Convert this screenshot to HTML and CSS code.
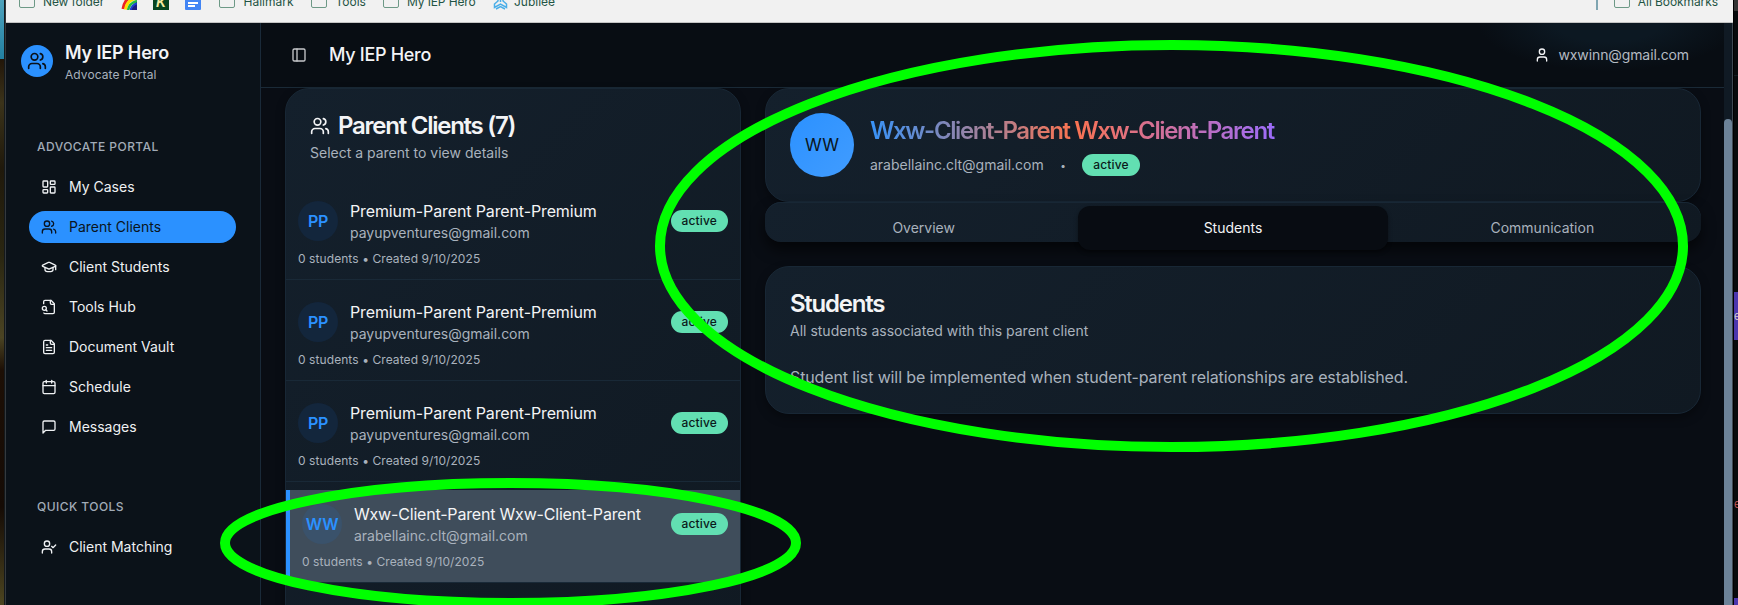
FILE: index.html
```html
<!DOCTYPE html>
<html lang="en">
<head>
<meta charset="utf-8">
<title>My IEP Hero</title>
<link rel="stylesheet" href="styles.css">
</head>
<body>
<svg class="defs" aria-hidden="true">
  <symbol id="users" viewBox="0 0 24 24"><path d="M16 21v-2a4 4 0 0 0-4-4H6a4 4 0 0 0-4 4v2"/><circle cx="9" cy="7" r="4"/><path d="M22 21v-2a4 4 0 0 0-3-3.87"/><path d="M16 3.13a4 4 0 0 1 0 7.75"/></symbol>
  <symbol id="dashboard" viewBox="0 0 24 24"><rect width="7" height="9" x="3" y="3" rx="1"/><rect width="7" height="5" x="14" y="3" rx="1"/><rect width="7" height="9" x="14" y="12" rx="1"/><rect width="7" height="5" x="3" y="16" rx="1"/></symbol>
  <symbol id="cap" viewBox="0 0 24 24"><path d="M21.42 10.922a1 1 0 0 0-.019-1.838L12.83 5.18a2 2 0 0 0-1.66 0L2.6 9.08a1 1 0 0 0 0 1.832l8.57 3.908a2 2 0 0 0 1.66 0z"/><path d="M22 10v6"/><path d="M6 12.5V16a6 3 0 0 0 12 0v-3.5"/></symbol>
  <symbol id="file-search" viewBox="0 0 24 24"><path d="M14 2v4a2 2 0 0 0 2 2h4"/><path d="M4.268 21a2 2 0 0 0 1.727 1H18a2 2 0 0 0 2-2V7l-5-5H6a2 2 0 0 0-2 2v3"/><path d="m9 18-1.500-1.500"/><circle cx="5" cy="14" r="3"/></symbol>
  <symbol id="file-text" viewBox="0 0 24 24"><path d="M15 2H6a2 2 0 0 0-2 2v16a2 2 0 0 0 2 2h12a2 2 0 0 0 2-2V7Z"/><path d="M14 2v4a2 2 0 0 0 2 2h4"/><path d="M10 9H8"/><path d="M16 13H8"/><path d="M16 17H8"/></symbol>
  <symbol id="calendar" viewBox="0 0 24 24"><path d="M8 2v4"/><path d="M16 2v4"/><rect width="18" height="18" x="3" y="4" rx="2"/><path d="M3 10h18"/></symbol>
  <symbol id="message" viewBox="0 0 24 24"><path d="M21 15a2 2 0 0 1-2 2H7l-4 4V5a2 2 0 0 1 2-2h14a2 2 0 0 1 2 2z"/></symbol>
  <symbol id="user-check" viewBox="0 0 24 24"><path d="m16 11 2 2 4-4"/><path d="M16 21v-2a4 4 0 0 0-4-4H6a4 4 0 0 0-4 4v2"/><circle cx="9" cy="7" r="4"/></symbol>
  <symbol id="user" viewBox="0 0 24 24"><path d="M19 21v-2a4 4 0 0 0-4-4H9a4 4 0 0 0-4 4v2"/><circle cx="12" cy="7" r="4"/></symbol>
  <symbol id="panel" viewBox="0 0 24 24"><rect width="18" height="18" x="3" y="3" rx="2"/><path d="M9 3v18"/></symbol>
</svg>

<div class="screen">
  <div class="desk-left"><div class="desk-sky"></div><div class="desk-ground"></div></div>

  <div class="window">
    <div class="bookmarks">
      <div class="bm bm-new"><i class="folder"></i><span>New folder</span></div>
      <svg class="fav" viewBox="0 0 16 16"><path d="M9 16L16 6V16z" fill="#1c1c80"/><path d="M2 15Q4 3 14 2" stroke="#e22" stroke-width="3" fill="none"/><path d="M4.500 15.500Q6 6 15 4.500" stroke="#fd0" stroke-width="3" fill="none"/><path d="M7 16Q8.500 9 16 7" stroke="#2b4" stroke-width="2.500" fill="none"/><path d="M9.500 16Q11 11 16 9.500" stroke="#1c3fd0" stroke-width="2" fill="none"/></svg>
      <span class="fav fav-k">K</span>
      <span class="fav fav-doc"><b></b><b></b></span>
      <div class="bm bm-hall"><i class="folder"></i><span>Hallmark</span></div>
      <div class="bm bm-tools"><i class="folder"></i><span>Tools</span></div>
      <div class="bm bm-hero"><i class="folder"></i><span>My IEP Hero</span></div>
      <div class="bm bm-jub"><svg width="15" height="16" viewBox="0 0 15 16" fill="none" stroke="#4aaee8" stroke-width="1.500"><path d="M7.500 1v7M5 3v4L1.500 10v3.500L7.500 10l6 3.500V10L10 7V3M3 15l4.500-2.500L12 15"/></svg><span>Jubilee</span></div>
      <div class="bm bm-all"><i class="folder"></i><span>All Bookmarks</span></div>
    </div>

    <div class="app">
      <aside class="sidebar">
        <div class="brand">
          <div class="brand-logo"><svg class="ic i20"><use href="#users"/></svg></div>
          <div><div class="brand-name">My IEP Hero</div><div class="brand-sub">Advocate Portal</div></div>
        </div>
        <div class="group-label">ADVOCATE PORTAL</div>
        <nav class="nav">
          <a class="nav-item"><svg class="ic"><use href="#dashboard"/></svg><span>My Cases</span></a>
          <a class="nav-item current"><svg class="ic"><use href="#users"/></svg><span>Parent Clients</span></a>
          <a class="nav-item"><svg class="ic"><use href="#cap"/></svg><span>Client Students</span></a>
          <a class="nav-item"><svg class="ic"><use href="#file-search"/></svg><span>Tools Hub</span></a>
          <a class="nav-item"><svg class="ic"><use href="#file-text"/></svg><span>Document Vault</span></a>
          <a class="nav-item"><svg class="ic"><use href="#calendar"/></svg><span>Schedule</span></a>
          <a class="nav-item"><svg class="ic"><use href="#message"/></svg><span>Messages</span></a>
        </nav>
        <div class="group-label quick">QUICK TOOLS</div>
        <nav class="nav">
          <a class="nav-item"><svg class="ic"><use href="#user-check"/></svg><span>Client Matching</span></a>
        </nav>
      </aside>

      <div class="main">
        <header class="topbar">
          <svg class="ic dim"><use href="#panel"/></svg>
          <h1>My IEP Hero</h1>
          <div class="account"><svg class="ic"><use href="#user"/></svg><span>wxwinn@gmail.com</span></div>
        </header>
        <div class="content">
          <section class="card list-card">
            <h2 class="title"><svg class="ic i20"><use href="#users"/></svg><span class="t-list">Parent Clients (7)</span></h2>
            <p class="sub s-list">Select a parent to view details</p>
            <div class="rows">
              <div class="row"><div class="row-top"><div class="avatar">PP</div><div class="who"><div class="name">Premium-Parent Parent-Premium</div><div class="mail">payupventures@gmail.com</div></div><span class="badge">active</span></div><div class="meta">0 students • Created 9/10/2025</div></div>
              <div class="row"><div class="row-top"><div class="avatar">PP</div><div class="who"><div class="name">Premium-Parent Parent-Premium</div><div class="mail">payupventures@gmail.com</div></div><span class="badge">active</span></div><div class="meta">0 students • Created 9/10/2025</div></div>
              <div class="row"><div class="row-top"><div class="avatar">PP</div><div class="who"><div class="name">Premium-Parent Parent-Premium</div><div class="mail">payupventures@gmail.com</div></div><span class="badge">active</span></div><div class="meta">0 students • Created 9/10/2025</div></div>
              <div class="row selected"><div class="row-top"><div class="avatar">WW</div><div class="who"><div class="name">Wxw-Client-Parent Wxw-Client-Parent</div><div class="mail">arabellainc.clt@gmail.com</div></div><span class="badge">active</span></div><div class="meta">0 students • Created 9/10/2025</div></div>
            </div>
          </section>

          <div class="detail">
            <section class="card profile">
              <div class="big-avatar">WW</div>
              <div>
                <h2 class="title gradient"><span>Wxw-Client-Parent Wxw-Client-Parent</span></h2>
                <div class="contact"><span class="mail">arabellainc.clt@gmail.com</span><span class="dot">•</span><span class="badge">active</span></div>
              </div>
            </section>
            <div class="tabs"><div class="tab">Overview</div><div class="tab on">Students</div><div class="tab">Communication</div></div>
            <section class="card students">
              <h2 class="title">Students</h2>
              <p class="sub">All students associated with this parent client</p>
              <p class="body">Student list will be implemented when student-parent relationships are established.</p>
            </section>
          </div>
        </div>
      </div>
      <div class="scrollbar"><div class="thumb"></div></div>
    </div>
  </div>

  <div class="desk-right"><i class="peek violet">e</i><i class="peek red">e</i><i class="peek violet low"></i></div>

  <svg class="marks" viewBox="0 0 1738 605">
    <ellipse cx="1171.500" cy="246" rx="511.500" ry="201"/>
    <ellipse cx="510.500" cy="543" rx="285.500" ry="60"/>
  </svg>
</div>
</body>
</html>
```
FILE: styles.css
```css
* { box-sizing: border-box; margin: 0; padding: 0; }
body { width: 1738px; height: 605px; overflow: hidden; background: #05080c; font-family: Inter, "Liberation Sans", sans-serif; color: #f3f4f6; }
.defs { position: absolute; width: 0; height: 0; }
.screen { position: relative; display: flex; width: 1738px; height: 605px; overflow: hidden; }

.desk-left { width: 5px; display: flex; flex-direction: column; border-right: 1px solid #14181b; }
.desk-sky { height: 59px; background: linear-gradient(#4fa3bd, #2280a2); }
.desk-ground { flex: 1; background: linear-gradient(#221609, #3b331a 8%, #20190b 20%, #2a2611 36%, #4b4423 51%, #1d0f05 57%, #150b05 82%, #4c4520 100%); }
.desk-right { position: relative; width: 5px; border-left: 1px solid #000; background: linear-gradient(#333 0 11px, #070a0c 11px 75px, #111b20 75px 76px, #070a0c 76px); }
.peek { position: absolute; left: 0; width: 4px; overflow: hidden; font: 11px Inter, sans-serif; }
.peek.violet { top: 292px; height: 48px; line-height: 48px; background: #4b36ad; color: #ccc; }
.peek.red { top: 496px; height: 16px; line-height: 16px; color: #c45555; }
.peek.low { top: 598px; height: 7px; }

.window { width: 1728px; display: flex; flex-direction: column; border-left: 1px solid #34393d; }
.bookmarks { height: 23px; flex: none; display: flex; align-items: flex-start; background: #f1f1f1; border-bottom: 1px solid #c4c4c4; overflow: hidden; color: #1f5444; font-size: 12px; padding-left: 13px; }
.bm { display: flex; height: 10px; gap: 8px; }
.bm span { line-height: 16px; height: 16px; margin-top: -6px; white-space: nowrap; }
.folder { width: 16px; height: 14px; flex: none; margin-top: -6px; border: 1.500px solid #6d9986; border-radius: 2px; }
.bm-new { width: 102px; }
.bm-new span { letter-spacing: -.1px; }
.fav { width: 16px; height: 16px; margin-top: -6px; margin-right: 16px; flex: none; }
.fav-k { background: #07441f; color: #f3eaa0; font: italic bold 14px/16px "Liberation Sans", sans-serif; text-align: center; }
.fav-doc { background: #4285f4; border-radius: 1px; margin-right: 18px; padding: 8px 3px 0; }
.fav-doc b { display: block; height: 2px; background: #fff; margin-bottom: 1px; }
.fav-doc b + b { width: 7px; }
.bm-hall { width: 92px; }
.bm-tools { width: 72px; }
.bm-tools, .bm-hall { gap: 8.500px; }
.bm-hero { width: 110px; }
.bm-hero span { letter-spacing: -.12px; }
.bm-jub { gap: 6px; }
.bm-jub svg { margin-top: -6px; }
.bm-all { margin-left: auto; margin-right: 15px; padding-left: 16px; border-left: 2px solid #7fa5b1; }
.bm-all span { letter-spacing: -.08px; }

.app { flex: 1; min-height: 0; display: flex; background: #090d14; border-right: 1px solid #3d4852; }
.ic { width: 16px; height: 16px; flex: none; fill: none; stroke: currentColor; stroke-width: 2; stroke-linecap: round; stroke-linejoin: round; }
.i20 { width: 20px; height: 20px; }
.dim { color: #c6c8cb; }

.sidebar { width: 255px; flex: none; background: #0b1219; border-right: 1px solid #1a2a39; }
.brand { display: flex; gap: 12px; padding: 16px 15px 0; height: 113px; align-items: flex-start; }
.brand-logo { width: 32px; height: 32px; margin-top: 6px; border-radius: 50%; background: #2b91ff; color: #0a1119; display: grid; place-items: center; }
.brand-name { font-size: 18px; line-height: 28px; font-weight: 600; letter-spacing: -.15px; }
.brand-sub { font-size: 12px; line-height: 16px; color: #a8b1bc; letter-spacing: .07px; }
.group-label { height: 21px; line-height: 21px; padding-left: 31px; font-size: 12px; font-weight: 500; letter-spacing: .45px; color: #a1abb7; white-space: nowrap; }
.nav { padding: 14px 24px 0 23px; display: flex; flex-direction: column; gap: 8px; }
.nav-item { height: 32px; display: flex; align-items: center; gap: 12px; padding-left: 12px; border-radius: 16px; font-size: 14px; color: #eff1f3; }
.nav-item span { line-height: 18px; }
.current { background: #2b91ff; color: #0a1420; }
.quick { margin-top: 53px; }

.main { flex: 1; min-width: 0; display: flex; flex-direction: column; }
.topbar { height: 65px; flex: none; display: flex; align-items: center; padding: 0 35px 1px 30px; border-bottom: 1px solid #1a2a37; background: radial-gradient(ellipse 130px 48px at 1347px 0, #0c1822 40%, transparent), #080d13; }
.topbar h1 { margin-left: 22px; font-size: 18px; font-weight: 500; letter-spacing: -.3px; }
.account { margin-left: auto; display: flex; align-items: center; gap: 8px; font-size: 14px; }
.account span { color: #b4bac2; letter-spacing: -.1px; line-height: 18px; }

.content { flex: 1; min-height: 0; display: flex; align-items: flex-start; gap: 24px; padding: 0 23px 0 24px; }
.card { border: 1px solid #182735; border-radius: 24px; background: linear-gradient(135deg, #14202c, #101922); box-shadow: 0 4px 10px rgba(0,0,0,.35); }
.list-card { width: 456px; height: 560px; flex: none; padding-top: 21px; }
.title { display: flex; align-items: center; gap: 8px; font-size: 24px; line-height: 32px; font-weight: 600; letter-spacing: -1.250px; white-space: nowrap; }
.list-card .title { padding-left: 24px; }
.sub { font-size: 14px; line-height: 20px; color: #a9b2bd; }
.s-list { margin-top: 1px; padding-left: 24px; }
.rows { display: flex; flex-direction: column; gap: 8px; margin-top: 24px; }
.row { height: 93px; padding: 12px; border-bottom: 1px solid #192937; }
.row-top { display: flex; align-items: center; gap: 12px; height: 44px; }
.avatar { width: 40px; height: 40px; flex: none; border-radius: 50%; background: #13263c; color: #2b91ff; font-size: 16px; font-weight: 600; letter-spacing: -.3px; display: grid; place-items: center; }
.who { flex: 1; min-width: 0; white-space: nowrap; }
.name { font-size: 16px; line-height: 24px; letter-spacing: -.12px; }
.selected .name { letter-spacing: -.19px; }
.mail { font-size: 14px; line-height: 20px; color: #a9b2bd; letter-spacing: -.01px; }
.badge { height: 22px; padding: 0 11px; border-radius: 11px; background: #62dfb2; color: #0a1a1a; font-size: 12px; line-height: 22px; font-weight: 500; letter-spacing: .15px; }
.meta { margin-top: 8px; font-size: 12px; line-height: 16px; color: #a9b2bd; letter-spacing: .08px; }
.selected { border-left: 4px solid #2b91ff; background: #3f4d5b; }
.selected .avatar { background: #3a526b; }

.detail { flex: 1; min-width: 0; }
.profile { height: 114px; display: flex; padding: 24px; gap: 16px; }
.big-avatar { width: 64px; height: 64px; border-radius: 50%; background: linear-gradient(135deg, #2b91ff, #419cff); color: #0a1420; font-size: 17px; display: grid; place-items: center; }
.gradient { margin-top: 2px; letter-spacing: -1.390px; }
.gradient span { background: linear-gradient(90deg, #3793f8, #fb7350 50%, #9b6cfb); -webkit-background-clip: text; background-clip: text; color: transparent; padding-right: 2px; }
.contact { display: flex; align-items: center; margin-top: 7px; }
.dot { color: #a9b2bd; font-size: 10px; margin: 0 16.500px; }
.tabs { display: grid; grid-template-columns: repeat(3, 1fr); height: 40px; padding: 4px; border-radius: 16px; background: linear-gradient(135deg, #14202c, #101922); box-shadow: inset 0 1px #182735, 0 8px 14px rgba(0,0,0,.6); }
.tab { height: 44px; line-height: 44px; text-align: center; font-size: 14px; color: #a9b2bd; }
.tab.on { background: #080c12; color: #f3f4f6; border-radius: 12px; box-shadow: 0 2px 4px rgba(0,0,0,.4); }
.students { margin-top: 24px; height: 148px; padding: 21px 24px; }
.students .sub { margin-top: 1px; }
.body { margin-top: 24px; font-size: 16px; line-height: 24px; color: #a9b2bd; letter-spacing: -.12px; }

.scrollbar { width: 8px; flex: none; background: #101a24; padding-top: 96px; }
.thumb { height: 100%; border-radius: 4px 4px 0 0; background: #6c8298; }

/* hand-drawn highlights over the window */
.marks { position: absolute; inset: 0; width: 1738px; height: 605px; fill: none; stroke: #00ff00; stroke-width: 10; pointer-events: none; }
```
